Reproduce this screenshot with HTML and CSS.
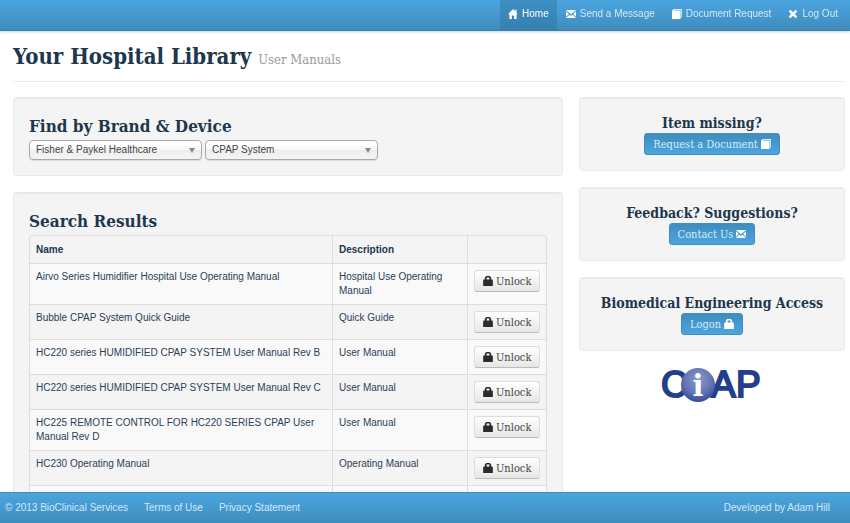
FILE: index.html
```html
<!DOCTYPE html>
<html lang="en">
<head>
    <meta charset="UTF-8">
    <meta name="viewport" content="width=device-width, initial-scale=1.0">
    <title>Your Hospital Library</title>
    <link rel="stylesheet" href="styles.css">
</head>
<body>
    <!-- Icon set -->
    <svg class="sprite" aria-hidden="true">
        <symbol id="icon-home" viewBox="0 0 14 14"><path d="M7 0 0 7.500h2V14h3.500V9h3v5H12V7.500h2l-2-2V1h-2v2z"/></symbol>
        <symbol id="icon-mail" viewBox="0 0 14 14"><path d="M0 1.500h14L7 7.500zM0 3 4 7 0 11zM14 3 10 7 14 11zM0 12.500 5 8l2 1.800L9 8l5 4.500z"/></symbol>
        <symbol id="icon-book" viewBox="0 0 14 14"><path d="M3 0h11v12h-1V1H3.500L2.500 2H12v12H0V2z"/></symbol>
        <symbol id="icon-remove" viewBox="0 0 14 14"><path d="M3.500 1 7 4.500 10.500 1 13 3.500 9.500 7l3.500 3.500-2.500 2.500L7 9.500 3.500 13 1 10.500 4.500 7 1 3.500z"/></symbol>
        <symbol id="icon-lock" viewBox="0 0 14 14"><path fill-rule="evenodd" d="M4.500 0h5L11.500 2v3h1.500l.8 1V14H.2V6L1 5h1.500V2zM5 2v3h4V2z"/></symbol>
    </svg>

    <!-- Top bar -->
    <nav class="navbar">
        <a class="active" href="#"><svg class="icon"><use href="#icon-home"/></svg>Home</a>
        <a href="#"><svg class="icon"><use href="#icon-mail"/></svg>Send a Message</a>
        <a href="#"><svg class="icon"><use href="#icon-book"/></svg>Document Request</a>
        <a href="#"><svg class="icon"><use href="#icon-remove"/></svg>Log Out</a>
    </nav>

    <div class="container">
        <header class="page-header">
            <h1>Your Hospital Library <small>User Manuals</small></h1>
        </header>

        <div class="row">
            <main class="column">
                <section class="well">
                    <h2>Find by Brand &amp; Device</h2>
                    <form class="filters">
                        <div class="select">
                            <select aria-label="Brand">
                                <option>Fisher &amp; Paykel Healthcare</option>
                            </select>
                        </div>
                        <div class="select">
                            <select aria-label="Device">
                                <option>CPAP System</option>
                            </select>
                        </div>
                    </form>
                </section>

                <section class="well">
                    <h2>Search Results</h2>
                    <table class="table">
                        <thead>
                            <tr>
                                <th class="col-name">Name</th>
                                <th class="col-description">Description</th>
                                <th></th>
                            </tr>
                        </thead>
                        <tbody>
                            <tr>
                                <td>Airvo Series Humidifier Hospital Use Operating Manual</td>
                                <td>Hospital Use Operating Manual</td>
                                <td><button class="btn" type="button"><svg class="icon"><use href="#icon-lock"/></svg>Unlock</button></td>
                            </tr>
                            <tr>
                                <td>Bubble CPAP System Quick Guide</td>
                                <td>Quick Guide</td>
                                <td><button class="btn" type="button"><svg class="icon"><use href="#icon-lock"/></svg>Unlock</button></td>
                            </tr>
                            <tr>
                                <td>HC220 series HUMIDIFIED CPAP SYSTEM User Manual Rev B</td>
                                <td>User Manual</td>
                                <td><button class="btn" type="button"><svg class="icon"><use href="#icon-lock"/></svg>Unlock</button></td>
                            </tr>
                            <tr>
                                <td>HC220 series HUMIDIFIED CPAP SYSTEM User Manual Rev C</td>
                                <td>User Manual</td>
                                <td><button class="btn" type="button"><svg class="icon"><use href="#icon-lock"/></svg>Unlock</button></td>
                            </tr>
                            <tr>
                                <td>HC225 REMOTE CONTROL FOR HC220 SERIES CPAP User Manual Rev D</td>
                                <td>User Manual</td>
                                <td><button class="btn" type="button"><svg class="icon"><use href="#icon-lock"/></svg>Unlock</button></td>
                            </tr>
                            <tr>
                                <td>HC230 Operating Manual</td>
                                <td>Operating Manual</td>
                                <td><button class="btn" type="button"><svg class="icon"><use href="#icon-lock"/></svg>Unlock</button></td>
                            </tr>
                            <tr>
                                <td></td>
                                <td></td>
                                <td></td>
                            </tr>
                        </tbody>
                    </table>
                </section>
            </main>

            <aside class="column">
                <section class="well side">
                    <h3>Item missing?</h3>
                    <button class="btn btn-primary" type="button">Request a Document<svg class="icon"><use href="#icon-book"/></svg></button>
                </section>
                <section class="well side">
                    <h3>Feedback? Suggestions?</h3>
                    <button class="btn btn-primary" type="button">Contact Us<svg class="icon"><use href="#icon-mail"/></svg></button>
                </section>
                <section class="well side">
                    <h3>Biomedical Engineering Access</h3>
                    <button class="btn btn-primary" type="button">Logon<svg class="icon"><use href="#icon-lock"/></svg></button>
                </section>
                <svg class="logo" viewBox="-3 -6 108 48" role="img" aria-label="CiAP">
                    <defs>
                        <radialGradient id="ball" cx="50%" cy="35%" r="65%">
                            <stop offset="0" stop-color="#8c9bd0"/>
                            <stop offset="0.600" stop-color="#6675b5"/>
                            <stop offset="1" stop-color="#3a4a96"/>
                        </radialGradient>
                    </defs>
                    <text class="logo-text" x="0" y="30">C</text>
                    <text class="logo-text" x="50" y="30">A</text>
                    <text class="logo-text" x="75" y="30">P</text>
                    <circle cx="37" cy="18" r="17" fill="url(#ball)"/>
                    <text class="logo-i" x="37" y="29">i</text>
                </svg>
            </aside>
        </div>
    </div>

    <!-- Bottom bar -->
    <footer class="footer">
        <span>© 2013 BioClinical Services</span>
        <a href="#">Terms of Use</a>
        <a href="#">Privacy Statement</a>
        <span class="credit">Developed by Adam Hill</span>
    </footer>
</body>
</html>
```
FILE: styles.css
```css
* {
    box-sizing: border-box;
}

body {
    margin: 0;
    padding: 31px 0;
    background-color: #fff;
    color: #2b4158;
    font-family: "Liberation Sans", Arial, sans-serif;
    font-size: 10px;
    line-height: 14px;
}

h1, h2, h3 {
    margin: 0;
    color: #20364c;
    font-family: "DejaVu Serif Condensed", "DejaVu Serif", serif;
    font-weight: bold;
}

.sprite {
    position: absolute;
    width: 0;
    height: 0;
}

.icon {
    width: 10px;
    height: 10px;
    fill: currentColor;
    flex: none;
}

/* Bars */
.navbar, .footer {
    position: fixed;
    left: 0;
    right: 0;
    z-index: 10;
    display: flex;
    height: 31px;
    color: #d3e8f5;
    background: linear-gradient(#4ba5df, #3f8dbd);
}

.navbar {
    top: 0;
    justify-content: flex-end;
    gap: 1px;
    padding-right: 4px;
    border-bottom: 1px solid #3a82ae;
    box-shadow: 0 1px 3px rgba(0, 0, 0, 0.2);
}

.navbar a {
    display: flex;
    align-items: center;
    gap: 4px;
    padding: 0 8px 2px;
    color: #d3e8f5;
    text-decoration: none;
}

.navbar .icon {
    fill: #fff;
}

.navbar a.active {
    background-color: rgba(40, 110, 155, 0.4);
    color: #fff;
}

.footer {
    bottom: 0;
    align-items: center;
    gap: 16px;
    padding: 0 20px 0 5px;
    border-top: 1px solid #3f8fc2;
}

.footer a {
    color: inherit;
    text-decoration: none;
}

.credit {
    margin-left: auto;
}

/* Layout */
.container {
    padding: 0 5px 0 13px;
}

.page-header {
    padding: 9px 0 5px;
    margin-bottom: 15px;
    border-bottom: 1px solid #e6eef3;
}

.page-header h1 {
    font-size: 22px;
    line-height: 32px;
}

.page-header small {
    color: #999;
    font-size: 13px;
    font-weight: normal;
}

.row {
    display: grid;
    grid-template-columns: 550fr 266fr;
    gap: 16px;
    align-items: start;
}

.column {
    display: flex;
    flex-direction: column;
    gap: 16px;
}

.well {
    padding: 15px;
    background-color: #f4f4f4;
    border: 1px solid #e9e9e9;
    border-radius: 4px;
    box-shadow: inset 0 1px 1px rgba(0, 0, 0, 0.05);
}

.well h2 {
    font-size: 17px;
    line-height: 27px;
}

.side {
    text-align: center;
}

.side h3 {
    font-size: 14px;
    line-height: 20px;
}

/* Filters */
.filters {
    display: flex;
    gap: 3px;
}

.select {
    position: relative;
    width: 173px;
}

.select::after {
    content: "";
    position: absolute;
    top: 8px;
    right: 7px;
    border: 3px solid transparent;
    border-top: 5px solid #888;
    border-bottom: 0;
    pointer-events: none;
}

.select select {
    display: block;
    width: 100%;
    height: 20px;
    padding: 0 20px 0 6px;
    appearance: none;
    color: #444;
    font: inherit;
    background: linear-gradient(#fff 20%, #f6f6f6 50%, #eee 52%, #f4f4f4);
    border: 1px solid #aaa;
    border-radius: 4px;
    box-shadow: 0 1px 1px rgba(0, 0, 0, 0.1);
}

/* Results */
.table {
    width: 100%;
    table-layout: fixed;
    border: 1px solid #ddd;
    border-radius: 4px;
    border-collapse: separate;
    border-spacing: 0;
}

.table th, .table td {
    padding: 6px;
    text-align: left;
    vertical-align: top;
}

.table th {
    padding: 7px 6px 6px;
    color: #20364c;
}

.table td {
    height: 35px;
    border-top: 1px solid #ddd;
}

.table th + th, .table td + td {
    border-left: 1px solid #ddd;
}

.table tbody tr:nth-child(odd) {
    background-color: #f9f9f9;
}

.col-name {
    width: 302px;
}

.col-description {
    width: 135px;
}

.btn {
    display: inline-flex;
    align-items: center;
    gap: 3px;
    height: 22px;
    padding: 0 8px;
    color: #444;
    font-family: "DejaVu Serif Condensed", "DejaVu Serif", serif;
    font-size: 11px;
    background: linear-gradient(#fff, #e6e6e6);
    border: 1px solid #ddd;
    border-bottom-color: #bbb;
    border-radius: 3px;
}

.btn .icon {
    fill: #2b2b2b;
}

.btn-primary {
    color: #d9ebf6;
    background: linear-gradient(#3f8dbd, #4ba5df);
    border-color: #3d8fc4;
}

.btn-primary .icon {
    fill: #fff;
}

/* Logo */
.logo {
    align-self: center;
    width: 108px;
    height: 48px;
    margin-top: -6px;
}

.logo-text {
    fill: #233f8b;
    stroke: #233f8b;
    stroke-width: 2px;
    font-family: "Liberation Sans", Arial, sans-serif;
    font-size: 37px;
}

.logo-i {
    fill: #fff;
    font-family: "DejaVu Serif", serif;
    font-size: 29px;
    font-weight: bold;
    text-anchor: middle;
}
```
